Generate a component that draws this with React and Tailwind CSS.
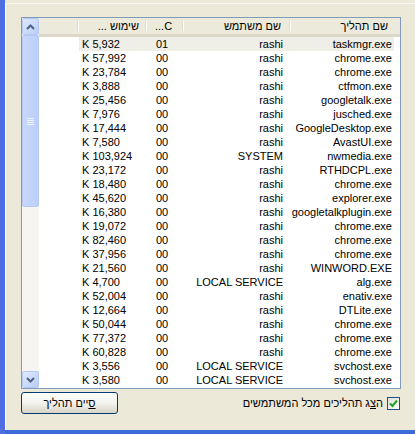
import React from 'react';

const rows = [
  ['taskmgr.exe', 'rashi', '01', 'K 5,932'],
  ['chrome.exe', 'rashi', '00', 'K 57,992'],
  ['chrome.exe', 'rashi', '00', 'K 23,784'],
  ['ctfmon.exe', 'rashi', '00', 'K 3,888'],
  ['googletalk.exe', 'rashi', '00', 'K 25,456'],
  ['jusched.exe', 'rashi', '00', 'K 7,976'],
  ['GoogleDesktop.exe', 'rashi', '00', 'K 17,444'],
  ['AvastUI.exe', 'rashi', '00', 'K 7,580'],
  ['nwmedia.exe', 'SYSTEM', '00', 'K 103,924'],
  ['RTHDCPL.exe', 'rashi', '00', 'K 23,172'],
  ['chrome.exe', 'rashi', '00', 'K 18,480'],
  ['explorer.exe', 'rashi', '00', 'K 45,620'],
  ['googletalkplugin.exe', 'rashi', '00', 'K 16,380'],
  ['chrome.exe', 'rashi', '00', 'K 19,072'],
  ['chrome.exe', 'rashi', '00', 'K 82,460'],
  ['chrome.exe', 'rashi', '00', 'K 37,956'],
  ['WINWORD.EXE', 'rashi', '00', 'K 21,560'],
  ['alg.exe', 'LOCAL SERVICE', '00', 'K 4,700'],
  ['enativ.exe', 'rashi', '00', 'K 52,004'],
  ['DTLite.exe', 'rashi', '00', 'K 12,664'],
  ['chrome.exe', 'rashi', '00', 'K 50,044'],
  ['chrome.exe', 'rashi', '00', 'K 77,372'],
  ['chrome.exe', 'rashi', '00', 'K 60,828'],
  ['svchost.exe', 'LOCAL SERVICE', '00', 'K 3,556'],
  ['svchost.exe', 'LOCAL SERVICE', '00', 'K 3,580'],
];

const Arrow = ({ up }) => (
  <svg width="9" height="6" viewBox="0 0 9 6">
    <path
      d={up ? 'M1 5 L4.5 1.5 L8 5' : 'M1 1 L4.5 4.5 L8 1'}
      fill="none"
      stroke="#4d6185"
      strokeWidth="2"
    />
  </svg>
);

const ScrollButton = ({ up }) => (
  <div className="h-[17px] w-[17px] shrink-0 rounded-[2px] border border-[#b4c8f6] bg-gradient-to-br from-[#e1eafe] to-[#b9cdf8] flex items-center justify-center">
    <Arrow up={up} />
  </div>
);

const HeaderCell = ({ w, children, className = '', last }) => (
  <div className={`relative h-full shrink-0 flex items-center ${w} ${className}`}>
    {children}
    {!last && (
      <div className="absolute right-0 top-[3px] bottom-[3px] flex">
        <div className="w-px bg-[#e0ddcd]" />
        <div className="w-px bg-white" />
      </div>
    )}
  </div>
);

export default function App() {
  return (
    <div
      className="w-[415px] h-[434px] bg-[#ece9d8] flex overflow-hidden text-[11px] text-black"
      style={{ fontFamily: '"Liberation Sans", "DejaVu Sans", Arial, sans-serif' }}
    >
      <div className="w-[5px] shrink-0 bg-[#4f6ee2]" />
      <div className="flex-1 flex flex-col">
        <div className="flex-1 flex flex-col border-l border-white border-t border-t-[#f6f5ef] mt-[3px] pl-[15px]">
          {/* list view */}
          <div className="mt-[13px] w-[380px] h-[372px] border border-[#7f9db9] bg-white flex overflow-hidden">
            {/* scrollbar */}
            <div className="w-[17px] shrink-0 flex flex-col bg-[#f6f5f0]">
              <ScrollButton up />
              <div className="h-[172px] shrink-0 rounded-[2px] border border-[#b4c8f6] bg-gradient-to-r from-[#c9d8fc] to-[#bccffa] flex flex-col items-center justify-center gap-[1px]">
                <div className="w-[7px] h-px bg-[#eef3fe]" />
                <div className="w-[7px] h-px bg-[#eef3fe]" />
                <div className="w-[7px] h-px bg-[#eef3fe]" />
                <div className="w-[7px] h-px bg-[#eef3fe]" />
              </div>
              <div className="flex-1" />
              <ScrollButton />
            </div>
            {/* columns */}
            <div className="flex-1 flex flex-col overflow-hidden">
              <div className="h-[19px] shrink-0 flex bg-[#ebeadb] border-b-[3px] border-[#dcd8c8]">
                <HeaderCell w="w-[40px]" />
                <HeaderCell w="w-[68px]" className="justify-end pr-[8px]">
                  <span dir="rtl">שימוש ...</span>
                </HeaderCell>
                <HeaderCell w="w-[37px]" className="pl-[8px]">
                  <span>...C</span>
                </HeaderCell>
                <HeaderCell w="w-[107px]" className="justify-end pr-[10px]">
                  <span dir="rtl">שם משתמש</span>
                </HeaderCell>
                <HeaderCell w="w-[108px]" className="justify-end pr-[11px]" last>
                  <span dir="rtl">שם תהליך</span>
                </HeaderCell>
              </div>
              <div className="flex-1 overflow-hidden">
                {rows.map((r, i) => (
                  <div key={i} className="h-[14px] flex items-center leading-[14px]">
                    <div className="w-[40px] shrink-0" />
                    <div className={`flex-1 flex h-full mr-[6px] ${i === 0 ? 'bg-[#efeee7]' : ''}`}>
                      <div className="w-[68px] shrink-0 pl-[3px] whitespace-nowrap">{r[3]}</div>
                      <div className="w-[37px] shrink-0 pl-[9px]">{r[2]}</div>
                      <div className="w-[107px] shrink-0 text-right pr-[8px] whitespace-nowrap">{r[1]}</div>
                      <div className="flex-1 text-right pr-[2px] whitespace-nowrap">{r[0]}</div>
                    </div>
                  </div>
                ))}
              </div>
            </div>
          </div>
          {/* bottom controls */}
          <div className="mt-[3px] w-[380px] flex items-start justify-between">
            <button className="w-[97px] h-[22px] rounded-[3px] border border-[#003c74] bg-gradient-to-b from-[#ffffff] via-[#f4f3ee] to-[#d8d3c6] text-[11px] flex items-center justify-center">
              <span dir="rtl">
                <u>ס</u>יים תהליך
              </span>
            </button>
            <div className="flex items-center gap-[4px] mt-[3px] mr-[1px]">
              <span dir="rtl">
                ה<u>צ</u>ג תהליכים מכל המשתמשים
              </span>
              <div className="w-[13px] h-[13px] border border-[#1c5180] bg-gradient-to-br from-[#dcdcd7] to-white flex items-center justify-center">
                <svg width="9" height="9" viewBox="0 0 9 9">
                  <path d="M1 4.5 L3.5 7 L8 1.5" fill="none" stroke="#21a121" strokeWidth="2" />
                </svg>
              </div>
            </div>
          </div>
        </div>
        <div className="h-[4px] shrink-0 bg-[#3a6bd9]" />
      </div>
    </div>
  );
}
